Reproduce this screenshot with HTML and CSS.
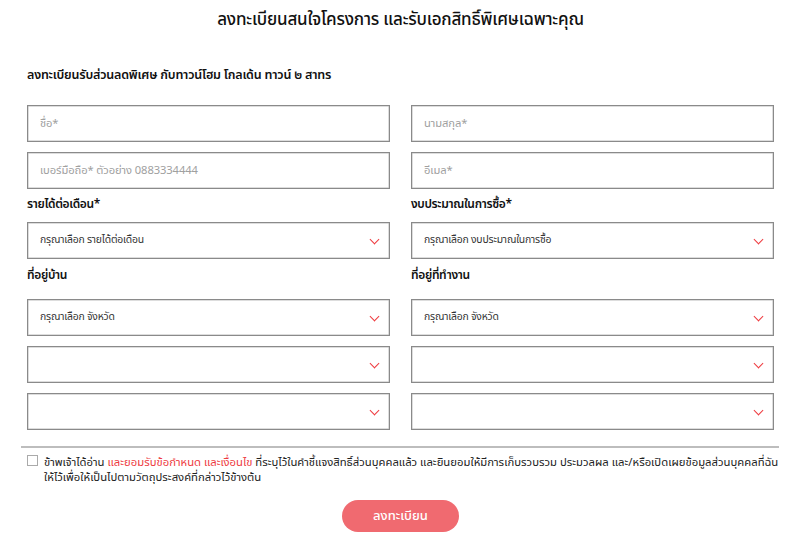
FILE: index.html
```html
<!DOCTYPE html>
<html lang="th">
<head>
    <meta charset="UTF-8">
    <meta name="viewport" content="width=device-width, initial-scale=1.0">
    <title>ลงทะเบียนสนใจโครงการ</title>
    <link rel="stylesheet" href="styles.css">
</head>
<body>
    <div class="container">
        <h1>ลงทะเบียนสนใจโครงการ และรับเอกสิทธิ์พิเศษเฉพาะคุณ</h1>
        <h2>ลงทะเบียนรับส่วนลดพิเศษ กับทาวน์โฮม โกลเด้น ทาวน์ ๒ สาทร</h2>

        <form class="fields">
            <div class="column">
                <input type="text" placeholder="ชื่อ*">
                <input type="text" placeholder="เบอร์มือถือ* ตัวอย่าง 0883334444">
                <label class="label first">รายได้ต่อเดือน*</label>
                <div class="select">กรุณาเลือก รายได้ต่อเดือน<span class="arrow"></span></div>
                <label class="label second">ที่อยู่บ้าน</label>
                <div class="select">กรุณาเลือก จังหวัด<span class="arrow"></span></div>
                <div class="select"><span class="arrow"></span></div>
                <div class="select"><span class="arrow"></span></div>
            </div>
            <div class="column">
                <input type="text" placeholder="นามสกุล*">
                <input type="text" placeholder="อีเมล*">
                <label class="label first">งบประมาณในการซื้อ*</label>
                <div class="select">กรุณาเลือก งบประมาณในการซื้อ<span class="arrow"></span></div>
                <label class="label second">ที่อยู่ที่ทำงาน</label>
                <div class="select">กรุณาเลือก จังหวัด<span class="arrow"></span></div>
                <div class="select"><span class="arrow"></span></div>
                <div class="select"><span class="arrow"></span></div>
            </div>
        </form>

        <hr class="divider">

        <div class="consent">
            <span class="checkbox"></span>
            <p>ข้าพเจ้าได้อ่าน <span class="link">และยอมรับข้อกำหนด และเงื่อนไข</span> ที่ระบุไว้ในคำชี้แจงสิทธิ์ส่วนบุคคลแล้ว และยินยอมให้มีการเก็บรวบรวม ประมวลผล และ/หรือเปิดเผยข้อมูลส่วนบุคคลที่ฉันให้ไว้เพื่อให้เป็นไปตามวัตถุประสงค์ที่กล่าวไว้ข้างต้น</p>
        </div>

        <div class="actions">
            <button type="button">ลงทะเบียน</button>
        </div>
    </div>
</body>
</html>
```
FILE: styles.css
```css
body {
    margin: 0;
    font-family: "Noto Sans Thai", "Noto Sans", sans-serif;
    color: #111;
    background: #fff;
}

.container {
    width: 800px;
    padding: 0 26px 0 27px;
    box-sizing: border-box;
}

h1 {
    margin: 0;
    padding-top: 7px;
    font-size: 17px;
    font-weight: 500;
    line-height: 26px;
    text-align: center;
    letter-spacing: -0.2px;
}

h2 {
    margin: 34px 0 0;
    font-size: 12.5px;
    font-weight: 600;
    line-height: 18px;
    letter-spacing: -0.2px;
}

.fields {
    display: grid;
    grid-template-columns: 1fr 1fr;
    column-gap: 21px;
    margin-top: 20px;
}

.column {
    display: flex;
    flex-direction: column;
}

input[type="text"], .select {
    height: 37px;
    box-sizing: border-box;
    border: 1px solid #8a8a8a;
    box-shadow: inset 0 0 0 0.5px #bbb;
    font-family: inherit;
    outline: none;
}

input[type="text"] {
    padding: 0 12px;
    font-size: 11.2px;
    letter-spacing: -0.1px;
}

input[type="text"]:first-child {
    margin-bottom: 10px;
}

input::placeholder {
    color: #a0a0a0;
}

.label {
    font-size: 12px;
    font-weight: 600;
    line-height: 20px;
    letter-spacing: -0.35px;
}

.label.first {
    margin-top: 5px;
    margin-bottom: 8px;
}

.label.second {
    margin-top: 6px;
    margin-bottom: 14px;
}

.select {
    position: relative;
    display: flex;
    align-items: center;
    padding: 0 12px 2px;
    font-size: 10.4px;
    color: #333;
    letter-spacing: -0.2px;
}

.select + .select {
    margin-top: 10px;
}

.arrow {
    position: absolute;
    right: 11px;
    top: 13px;
    width: 6px;
    height: 6px;
    border-right: 1.6px solid #ee3b3f;
    border-bottom: 1.6px solid #ee3b3f;
    transform: rotate(45deg);
}

.divider {
    margin: 16px -5px 0 -6px;
    border: none;
    height: 2px;
    background: #bdbdbd;
}

.consent {
    display: flex;
    align-items: flex-start;
    margin-top: 7px;
    margin-right: -12px;
}

.checkbox {
    flex: none;
    width: 9px;
    height: 9px;
    border: 1px solid #aaa;
    margin: 0 6px 0 0;
}

.consent p {
    margin: 0;
    font-size: 11.3px;
    line-height: 15px;
    color: #222;
    letter-spacing: 0;
}

.link {
    color: #ee3b3f;
}

.actions {
    display: flex;
    justify-content: center;
    margin-top: 15px;
}

button {
    width: 117px;
    height: 32px;
    border: none;
    border-radius: 16px;
    background: #f06a70;
    color: #fff;
    font-family: inherit;
    font-size: 13px;
    font-weight: 500;
    cursor: pointer;
}
```
